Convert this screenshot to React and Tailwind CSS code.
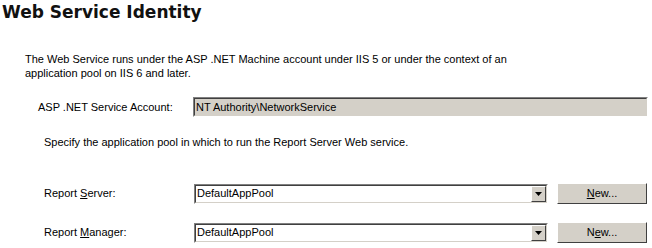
import React from "react";

const ui = { fontFamily: '"Liberation Sans", Arial, sans-serif' };

function Sunken({ children, className = "" }) {
  return (
    <div className={"shrink-0 border-t border-l border-[#808080] border-b border-r border-b-[#ffffff] border-r-[#ffffff] " + className}>
      <div className="flex h-full items-center border-t border-l border-[#404040] border-b border-r border-b-[#d4d0c8] border-r-[#d4d0c8]">
        {children}
      </div>
    </div>
  );
}

function Combo({ value }) {
  return (
    <Sunken className="h-[20px] w-[354px] bg-white">
      <span className="flex-1 pl-[1px] text-[11px] text-black">{value}</span>
      <div className="flex h-full w-[15px] items-center justify-center border-t border-l border-[#ffffff] border-b border-r border-b-[#404040] border-r-[#404040] bg-[#d4d0c8]">
        <svg width="7" height="4" viewBox="0 0 7 4">
          <path d="M0 0h7L3.5 4z" fill="#000" />
        </svg>
      </div>
    </Sunken>
  );
}

function Row({ accel, rest, first }) {
  return (
    <div className="flex items-center">
      <div className="w-[194px] shrink-0 whitespace-nowrap pl-[44px] text-[11px] text-black">
        Report <span className="underline">{accel}</span>
        {rest}
      </div>
      <Combo value="DefaultAppPool" />
      <button
        type="button"
        className="ml-[9px] flex h-[21px] w-[90px] shrink-0 items-center justify-center border-t border-l border-[#ffffff] border-b border-r border-b-[#404040] border-r-[#404040] bg-[#d4d0c8] text-[11px] text-black"
      >
        {first ? (
          <>
            <span className="underline">N</span>ew...
          </>
        ) : (
          <>
            N<span className="underline">e</span>w...
          </>
        )}
      </button>
    </div>
  );
}

export default function App() {
  return (
    <div className="h-[248px] w-[652px] overflow-hidden bg-white" style={ui}>
      <h1
        className="pl-[2px] pt-[1px] text-[17px] font-bold leading-[22px] text-[#111]"
        style={{ fontFamily: '"DejaVu Sans", Verdana, sans-serif' }}
      >
        Web Service Identity
      </h1>
      <p className="mt-[29px] pl-[25px] text-[11px] leading-[14px] text-black">
        The Web Service runs under the ASP .NET Machine account under IIS 5 or under the context of an
        <br />
        application pool on IIS 6 and later.
      </p>
      <div className="mt-[17px] flex items-center">
        <div className="w-[193px] shrink-0 whitespace-nowrap pl-[38px] text-[11px] text-black">ASP .NET Service Account:</div>
        <Sunken className="h-[20px] w-[455px] bg-[#d4d0c8]">
          <span className="pl-[1px] text-[11px] text-black">NT Authority\NetworkService</span>
        </Sunken>
      </div>
      <p className="mt-[18px] pl-[44px] text-[11px] leading-[14px] text-black">
        Specify the application pool in which to run the Report Server Web service.
      </p>
      <div className="mt-[34px] flex flex-col gap-[18px]">
        <Row accel="S" rest="erver:" first />
        <Row accel="M" rest="anager:" />
      </div>
    </div>
  );
}
